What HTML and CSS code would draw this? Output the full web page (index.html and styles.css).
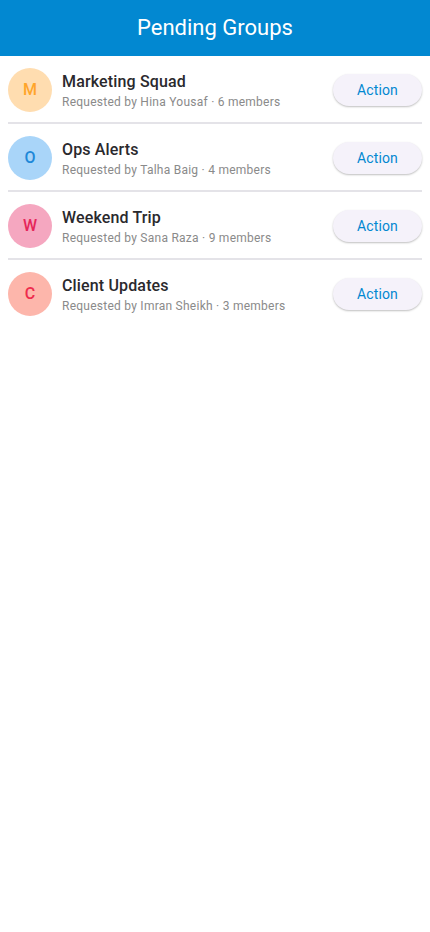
FILE: index.html
```html
<!DOCTYPE html>
<html>
<head>
<meta charset="utf-8">
<link rel="stylesheet" href="styles.css">
</head>
<body>
<header class="appbar"><h1 class="title">Pending Groups</h1></header>
<main class="list">
  <div class="row">
    <div class="avatar av-orange">M</div>
    <div class="info">
      <div class="name">Marketing Squad</div>
      <div class="sub">Requested by Hina Yousaf · 6 members</div>
    </div>
    <button class="action">Action</button>
  </div>
  <div class="divider"></div>
  <div class="row">
    <div class="avatar av-blue">O</div>
    <div class="info">
      <div class="name">Ops Alerts</div>
      <div class="sub">Requested by Talha Baig · 4 members</div>
    </div>
    <button class="action">Action</button>
  </div>
  <div class="divider"></div>
  <div class="row">
    <div class="avatar av-pink">W</div>
    <div class="info">
      <div class="name">Weekend Trip</div>
      <div class="sub">Requested by Sana Raza · 9 members</div>
    </div>
    <button class="action">Action</button>
  </div>
  <div class="divider"></div>
  <div class="row">
    <div class="avatar av-red">C</div>
    <div class="info">
      <div class="name">Client Updates</div>
      <div class="sub">Requested by Imran Sheikh · 3 members</div>
    </div>
    <button class="action">Action</button>
  </div>
</main>
</body>
</html>
```
FILE: styles.css
```css
* { box-sizing: border-box; }
html, body { margin: 0; padding: 0; background: #fff; }
body { font-family: Roboto, "Noto Sans", sans-serif; width: 430px; }
.appbar {
  height: 56px;
  background: #0288D1;
  display: flex;
  align-items: center;
  justify-content: center;
}
.title {
  margin: 0;
  color: #fff;
  font-size: 22px;
  font-weight: 400;
  line-height: 28px;
}
.list { padding: 0 8px; }
.row {
  height: 66px;
  display: flex;
  align-items: center;
  padding-top: 1px;
}
.avatar {
  width: 44px;
  height: 44px;
  border-radius: 50%;
  display: flex;
  align-items: center;
  justify-content: center;
  font-size: 16px;
  font-weight: 500;
  flex: none;
}
.av-orange { background: #FFDDB0; color: #FFA52A; }
.av-blue { background: #A9D5F9; color: #1E88D8; }
.av-pink { background: #F5A7C0; color: #E5265A; }
.av-red { background: #FDB6AB; color: #EE2C4D; }
.info { flex: 1; margin-left: 10px; min-width: 0; padding-top: 2px; }
.name {
  font-size: 16px;
  font-weight: 500;
  color: #2a292d;
  line-height: 22px;
  letter-spacing: 0.15px;
}
.sub {
  font-size: 12px;
  color: #8a8a8a;
  line-height: 18px;
  letter-spacing: 0.25px;
}
.action {
  flex: none;
  width: 89px;
  height: 32px;
  border: none;
  border-radius: 16px;
  background: #F5F2FA;
  color: #0288D1;
  font-family: Roboto, "Noto Sans", sans-serif;
  font-size: 14px;
  font-weight: 400;
  letter-spacing: 0.1px;
  box-shadow: 0 1px 2px rgba(0,0,0,0.25);
  padding: 0;
}
.divider { height: 2px; background: #e4e3e8; }
```
